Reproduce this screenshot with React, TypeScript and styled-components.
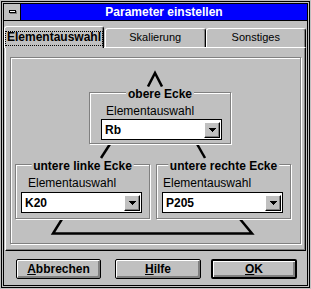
import styled, { createGlobalStyle } from "styled-components";

const GlobalStyle = createGlobalStyle`
  html, body {
    margin: 0;
    padding: 0;
    background: #c0c0c0;
  }
  body {
    font-family: "Liberation Sans", Arial, sans-serif;
    color: #000;
  }
`;

const Window = styled.div`
  width: 311px;
  height: 289px;
  box-sizing: border-box;
  padding: 1px;
  background: #c0c0c0;
`;

const OuterFrame = styled.div`
  height: 100%;
  box-sizing: border-box;
  border: 1px solid #000;
  padding: 1px;
`;

const InnerFrame = styled.div`
  height: 100%;
  box-sizing: border-box;
  border: 1px solid #000;
  display: flex;
  flex-direction: column;
`;

const TitleBar = styled.div`
  display: flex;
  height: 16px;
  border-bottom: 1px solid #000;
  flex-shrink: 0;
`;

const SysMenu = styled.div`
  width: 16px;
  border-right: 1px solid #000;
  display: flex;
  align-items: center;
  justify-content: center;
`;

const SysBar = styled.span`
  display: block;
  width: 7px;
  height: 3px;
  box-sizing: border-box;
  background: #fff;
  border: 1px solid #000;
  box-shadow: 1px 1px 0 #808080;
  margin-top: -1px;
`;

const Caption = styled.div`
  flex: 1;
  background: #0000ff;
  color: #fff;
  font-weight: bold;
  font-size: 12px;
  line-height: 16px;
  text-align: center;
`;

const Body = styled.div`
  flex: 1;
  display: flex;
  flex-direction: column;
  padding: 5px 1px 0 1px;
`;

const TabStrip = styled.div`
  display: flex;
  align-items: flex-end;
  height: 21px;
  position: relative;
  z-index: 1;
`;

const Tab = styled.div<{ $active?: boolean; $width: number; $offset: number }>`
  box-sizing: border-box;
  width: ${(p) => p.$width}px;
  margin-left: ${(p) => p.$offset}px;
  height: ${(p) => (p.$active ? 22 : 19)}px;
  margin-bottom: ${(p) => (p.$active ? -1 : 0)}px;
  background: #c0c0c0;
  border-top: 1px solid #fff;
  border-left: 1px solid #fff;
  border-right: 1px solid #000;
  border-radius: 3px 3px 0 0;
  box-shadow: inset -1px 0 0 #808080;
  text-align: center;
  font-size: ${(p) => (p.$active ? 12 : 11)}px;
  font-weight: ${(p) => (p.$active ? "bold" : "normal")};
  line-height: 13px;
  padding-top: ${(p) => (p.$active ? 4 : 2)}px;
`;

const FocusText = styled.span`
  display: inline-block;
  border: 1px dotted #000;
  padding: 0 1px 2px;
  line-height: 11px;
`;

const TabPage = styled.div`
  height: 204px;
  box-sizing: border-box;
  border-top: 1px solid #fff;
  border-left: 1px solid #fff;
  border-right: 1px solid #000;
  border-bottom: 1px solid #000;
  box-shadow: inset -1px -1px 0 #808080;
  padding: 9px 4px 6px 4px;
`;

const Etched = styled.div`
  height: 187px;
  box-sizing: border-box;
  border: 1px solid #808080;
  box-shadow: inset 1px 1px 0 #fff, 1px 1px 0 #fff;
  display: flex;
  flex-direction: column;
  align-items: flex-start;
`;

const Connector = styled.svg`
  display: block;
  flex-shrink: 0;
`;

const GroupBox = styled.div<{ $width: number; $height: number; $padLeft: number; $left?: number; $top?: number }>`
  position: relative;
  box-sizing: border-box;
  width: ${(p) => p.$width}px;
  height: ${(p) => p.$height}px;
  margin-left: ${(p) => p.$left ?? 0}px;
  margin-top: ${(p) => p.$top ?? 0}px;
  border: 1px solid #808080;
  box-shadow: inset 1px 1px 0 #fff, 1px 1px 0 #fff;
  padding: 12px 0 0 ${(p) => p.$padLeft}px;
  flex-shrink: 0;
`;

const Legend = styled.span`
  position: absolute;
  top: -6px;
  left: 50%;
  transform: translateX(-50%);
  background: #c0c0c0;
  padding: 0 2px;
  font-size: 12px;
  font-weight: bold;
  line-height: 14px;
  white-space: nowrap;
`;

const FieldLabel = styled.div<{ $indent: number; $gap: number }>`
  font-size: 12px;
  line-height: 13px;
  margin-left: ${(p) => p.$indent}px;
  margin-bottom: ${(p) => p.$gap}px;
`;

const Combo = styled.div`
  box-sizing: border-box;
  width: 121px;
  height: 21px;
  border: 1px solid #000;
  background: #fff;
  display: flex;
  align-items: center;
  padding-left: 3px;
`;

const ComboValue = styled.span`
  flex: 1;
  font-size: 12px;
  font-weight: bold;
  line-height: 14px;
`;

const DropButton = styled.span`
  box-sizing: border-box;
  width: 16px;
  height: 16px;
  margin-right: 1px;
  background: #c0c0c0;
  border-top: 1px solid #fff;
  border-left: 1px solid #fff;
  border-right: 1px solid #000;
  border-bottom: 1px solid #000;
  box-shadow: inset -1px -1px 0 #808080;
  display: flex;
  align-items: center;
  justify-content: center;
`;

const LowerRow = styled.div`
  display: flex;
  gap: 6px;
  margin-left: 4px;
`;

const ButtonBar = styled.div`
  display: flex;
  padding: 8px 0 0 11px;
`;

const PushButton = styled.button<{ $default?: boolean; $width: number; $offset: number }>`
  box-sizing: border-box;
  width: ${(p) => p.$width}px;
  height: 20px;
  margin: 0 0 0 ${(p) => p.$offset}px;
  padding: 0;
  background: #c0c0c0;
  border: ${(p) => (p.$default ? 2 : 1)}px solid #000;
  border-radius: 2px;
  box-shadow: inset 1px 1px 0 #fff, inset -2px -2px 0 #808080;
  font-family: "Liberation Sans", Arial, sans-serif;
  font-size: 12px;
  font-weight: bold;
  color: #000;
  line-height: 14px;
`;

function ComboBox({ value }: { value: string }) {
  return (
    <Combo>
      <ComboValue>{value}</ComboValue>
      <DropButton>
        <svg width="7" height="4" viewBox="0 0 7 4" shapeRendering="crispEdges">
          <polygon points="0,0 7,0 3.5,4" fill="#000" />
        </svg>
      </DropButton>
    </Combo>
  );
}

export default function App() {
  return (
    <>
      <GlobalStyle />
      <Window>
        <OuterFrame>
          <InnerFrame>
            <TitleBar>
              <SysMenu>
                <SysBar />
              </SysMenu>
              <Caption>Parameter einstellen</Caption>
            </TitleBar>
            <Body>
              <TabStrip>
                <Tab $active $width={100} $offset={-1}>
                  <FocusText>Elementauswahl</FocusText>
                </Tab>
                <Tab $width={101} $offset={1}>Skalierung</Tab>
                <Tab $width={101} $offset={0}>Sonstiges</Tab>
              </TabStrip>
              <TabPage>
                <Etched>
                  <Connector width="288" height="29">
                    <polyline points="137,28.5 144,15 151,28.5" fill="none" stroke="#000" strokeWidth="2.5" />
                  </Connector>
                  <GroupBox $width={142} $height={52} $padLeft={11} $left={78} $top={5}>
                    <Legend>obere Ecke</Legend>
                    <FieldLabel $indent={5} $gap={1}>Elementauswahl</FieldLabel>
                    <ComboBox value="Rb" />
                  </GroupBox>
                  <Connector width="288" height="20">
                    <line x1="99" y1="0" x2="90" y2="14" stroke="#000" strokeWidth="2.5" />
                    <line x1="186" y1="0" x2="194" y2="14" stroke="#000" strokeWidth="2.5" />
                  </Connector>
                  <LowerRow>
                    <GroupBox $width={135} $height={55} $padLeft={5}>
                      <Legend>untere linke Ecke</Legend>
                      <FieldLabel $indent={7} $gap={2}>Elementauswahl</FieldLabel>
                      <ComboBox value="K20" />
                    </GroupBox>
                    <GroupBox $width={135} $height={55} $padLeft={5}>
                      <Legend>untere rechte Ecke</Legend>
                      <FieldLabel $indent={1} $gap={2}>Elementauswahl</FieldLabel>
                      <ComboBox value="P205" />
                    </GroupBox>
                  </LowerRow>
                  <Connector width="288" height="17">
                    <polyline points="51,0 42,14.5 241,14.5 229,0" fill="none" stroke="#000" strokeWidth="2.5" />
                  </Connector>
                </Etched>
              </TabPage>
              <ButtonBar>
                <PushButton $width={85} $offset={0}>
                  <u>A</u>bbrechen
                </PushButton>
                <PushButton $width={86} $offset={14}>
                  <u>H</u>ilfe
                </PushButton>
                <PushButton $default $width={86} $offset={10}>
                  <u>O</u>K
                </PushButton>
              </ButtonBar>
            </Body>
          </InnerFrame>
        </OuterFrame>
      </Window>
    </>
  );
}
